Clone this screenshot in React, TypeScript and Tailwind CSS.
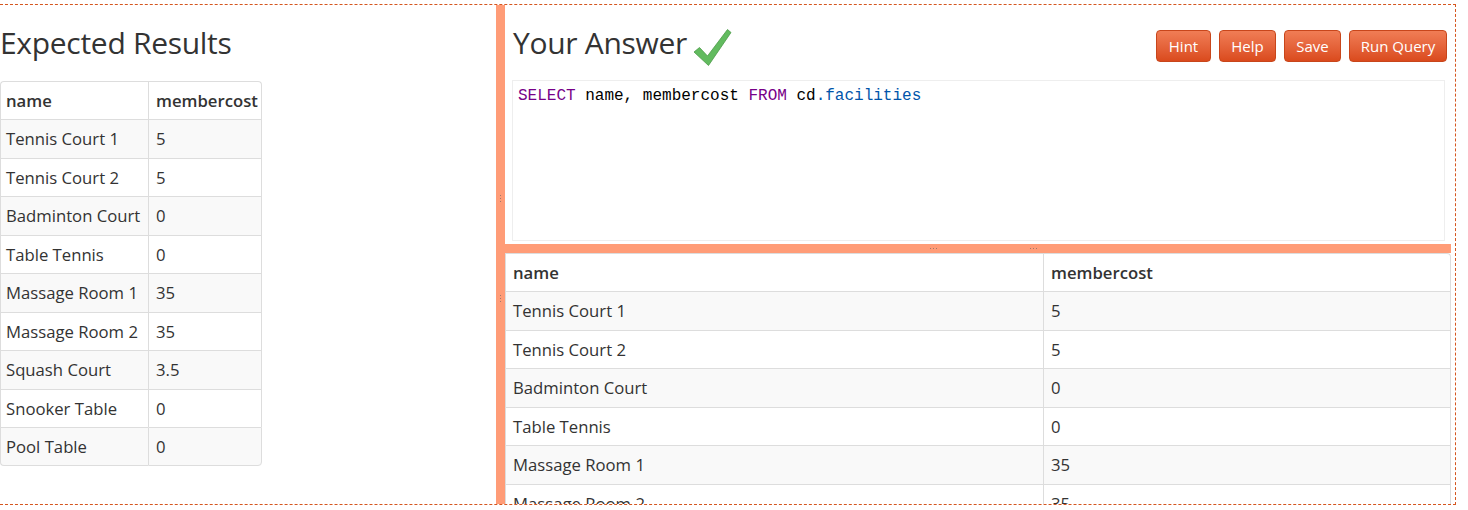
import React from 'react';

const rows: [string, string][] = [
  ['Tennis Court 1', '5'],
  ['Tennis Court 2', '5'],
  ['Badminton Court', '0'],
  ['Table Tennis', '0'],
  ['Massage Room 1', '35'],
  ['Massage Room 2', '35'],
  ['Squash Court', '3.5'],
  ['Snooker Table', '0'],
  ['Pool Table', '0'],
];

const buttons = [
  { label: 'Hint', w: 'w-[55px]' },
  { label: 'Help', w: 'w-[57px]' },
  { label: 'Save', w: 'w-[57px]' },
  { label: 'Run Query', w: 'w-[98px]' },
];

function Dots({ vertical }: { vertical?: boolean }) {
  return (
    <div className={`flex ${vertical ? 'flex-col' : 'flex-row'} gap-[2px]`}>
      <span className="w-px h-px bg-[#a0786a]" />
      <span className="w-px h-px bg-[#a0786a]" />
      <span className="w-px h-px bg-[#a0786a]" />
    </div>
  );
}

function CheckMark() {
  return (
    <svg width="40" height="40" viewBox="0 0 40 40" className="shrink-0 mt-[2px]">
      <polygon
        points="2,24 7.5,19.5 15.5,28 35.5,1.5 39,4.5 16.5,37.5"
        fill="#62bb5f"
        stroke="#4b9a48"
        strokeWidth="0.8"
        strokeLinejoin="round"
      />
    </svg>
  );
}

export default function App() {
  return (
    <div className="w-[1468px] h-[510px] bg-white pt-[4px] font-['Open_Sans',sans-serif] text-[#333]">
      <div className="w-[1456px] h-[501px] border-t border-r border-b border-dashed border-[#d5561f] flex overflow-hidden">
        {/* Expected results */}
        <div className="w-[496px] shrink-0">
          <h3 className="mt-[21px] mb-[21px] text-[30px] leading-[34px] tracking-[-0.3px] text-[#333]">Expected Results</h3>
          <table className="border-separate border-spacing-0 text-[16.7px]">
            <thead>
              <tr>
                <th className="w-[148px] text-left font-semibold pl-[5px] py-[8px] leading-[21.44px] border-t border-l border-[#ddd] rounded-tl-[4px]">name</th>
                <th className="w-[114px] text-left font-semibold pl-[7px] py-[8px] leading-[21.44px] border-t border-l border-r border-[#ddd] rounded-tr-[4px]">membercost</th>
              </tr>
            </thead>
            <tbody>
              {rows.map(([name, cost], i) => {
                const last = i === rows.length - 1;
                return (
                  <tr key={name} className={i % 2 === 0 ? 'bg-[#f9f9f9]' : 'bg-white'}>
                    <td className={`pl-[5px] py-[8px] leading-[21.44px] border-t border-l border-[#ddd] ${last ? 'border-b rounded-bl-[4px]' : ''}`}>{name}</td>
                    <td className={`pl-[7px] py-[8px] leading-[21.44px] border-t border-l border-r border-[#ddd] ${last ? 'border-b rounded-br-[4px]' : ''}`}>{cost}</td>
                  </tr>
                );
              })}
            </tbody>
          </table>
        </div>

        {/* vertical splitter */}
        <div className="w-[9px] shrink-0 bg-[#ff9c77] flex flex-col items-center pt-[190px] gap-[93px]">
          <Dots vertical />
          <Dots vertical />
        </div>

        {/* Your answer */}
        <div className="flex-1 flex flex-col pr-[4px] overflow-hidden">
          <div className="shrink-0 h-[75px] flex items-start justify-between pl-[8px] pr-[4px]">
            <div className="flex items-start gap-[5px] mt-[21px]">
              <h3 className="text-[30px] leading-[34px] tracking-[-0.3px] text-[#333]">Your Answer</h3>
              <CheckMark />
            </div>
            <div className="flex gap-[8px] mt-[25px]">
              {buttons.map((b) => (
                <button
                  key={b.label}
                  className={`${b.w} h-[32px] rounded-[4px] border border-[#c8461b] bg-gradient-to-b from-[#f07d55] to-[#da4a1c] text-white text-[15px] leading-[20px] text-center`}
                >
                  {b.label}
                </button>
              ))}
            </div>
          </div>

          <div className="shrink-0 ml-[7px] mr-[6px] h-[161px] border border-[#eee] pl-[5px] pt-[4px] font-['Liberation_Mono',monospace] text-[16px] leading-[22px] text-black whitespace-pre">
            <span className="text-[#770088]">SELECT</span> name, membercost <span className="text-[#770088]">FROM</span> cd<span className="text-[#0055aa]">.facilities</span>
          </div>

          {/* horizontal splitter */}
          <div className="shrink-0 mt-[3px] h-[9px] bg-[#ff9c77] flex items-center pl-[425px] gap-[93px]">
            <Dots />
            <Dots />
          </div>

          <table className="shrink-0 w-full border-separate border-spacing-0 text-[16.7px]">
            <thead>
              <tr>
                <th className="w-[538px] text-left font-semibold pl-[7px] py-[8px] leading-[21.44px] border-t border-l border-[#ddd]">name</th>
                <th className="text-left font-semibold pl-[7px] py-[8px] leading-[21.44px] border-t border-l border-r border-[#ddd] rounded-tr-[4px]">membercost</th>
              </tr>
            </thead>
            <tbody>
              {rows.map(([name, cost], i) => (
                <tr key={name} className={i % 2 === 0 ? 'bg-[#f9f9f9]' : 'bg-white'}>
                  <td className="pl-[7px] py-[8px] leading-[21.44px] border-t border-l border-[#ddd]">{name}</td>
                  <td className="pl-[7px] py-[8px] leading-[21.44px] border-t border-l border-r border-[#ddd]">{cost}</td>
                </tr>
              ))}
            </tbody>
          </table>
        </div>
      </div>
    </div>
  );
}
